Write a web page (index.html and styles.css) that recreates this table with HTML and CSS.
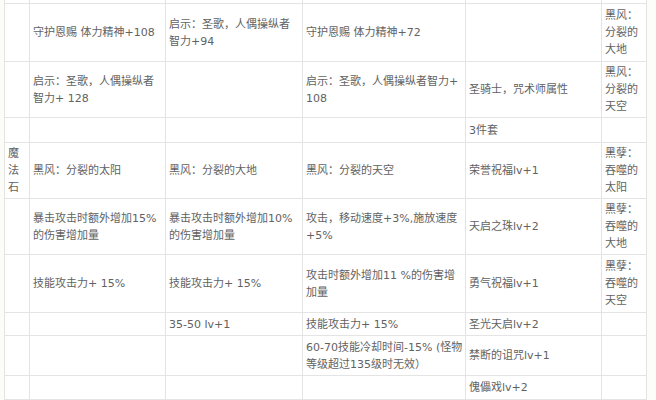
FILE: index.html
```html
<!DOCTYPE html>
<html lang="zh">
<head>
<meta charset="utf-8">
<link rel="stylesheet" href="styles.css">
</head>
<body>
<table class="gear">
  <colgroup>
    <col class="c1"><col class="c2"><col class="c3"><col class="c4"><col class="c5"><col class="c6">
  </colgroup>
  <tr class="r-stub"><td></td><td></td><td></td><td></td><td></td><td></td></tr>
  <tr class="r58">
    <td></td>
    <td>守护恩赐 体力精神+108</td>
    <td>启示：圣歌，人偶操纵者<br>智力+94</td>
    <td>守护恩赐 体力精神+72</td>
    <td></td>
    <td>黑风：<br>分裂的<br>大地</td>
  </tr>
  <tr class="r56">
    <td></td>
    <td>启示：圣歌，人偶操纵者<br>智力+ 128</td>
    <td></td>
    <td>启示：圣歌，人偶操纵者智力+<br>108</td>
    <td>圣骑士，咒术师属性</td>
    <td>黑风：<br>分裂的<br>天空</td>
  </tr>
  <tr class="r25">
    <td></td><td></td><td></td><td></td>
    <td>3件套</td>
    <td></td>
  </tr>
  <tr class="r56">
    <td>魔<br>法<br>石</td>
    <td>黑风：分裂的太阳</td>
    <td>黑风：分裂的大地</td>
    <td>黑风：分裂的天空</td>
    <td>荣誉祝福lv+1</td>
    <td>黑孽：<br>吞噬的<br>太阳</td>
  </tr>
  <tr class="r56">
    <td></td>
    <td>暴击攻击时额外增加15%<br>的伤害增加量</td>
    <td>暴击攻击时额外增加10%<br>的伤害增加量</td>
    <td>攻击，移动速度+3%,施放速度<br>+5%</td>
    <td>天启之珠lv+2</td>
    <td>黑孽：<br>吞噬的<br>大地</td>
  </tr>
  <tr class="r58">
    <td></td>
    <td>技能攻击力+ 15%</td>
    <td>技能攻击力+ 15%</td>
    <td>攻击时额外增加11 %的伤害增<br>加量</td>
    <td>勇气祝福lv+1</td>
    <td>黑孽：<br>吞噬的<br>天空</td>
  </tr>
  <tr class="r23">
    <td></td>
    <td></td>
    <td>35-50 lv+1</td>
    <td>技能攻击力+ 15%</td>
    <td>圣光天启lv+2</td>
    <td></td>
  </tr>
  <tr class="r40">
    <td></td>
    <td></td>
    <td></td>
    <td>60-70技能冷却时间-15% (怪物<br>等级超过135级时无效）</td>
    <td>禁断的诅咒lv+1</td>
    <td></td>
  </tr>
  <tr class="r24">
    <td></td><td></td><td></td><td></td>
    <td>傀儡戏lv+2</td>
    <td></td>
  </tr>
</table>
</body>
</html>
```
FILE: styles.css
```css
html, body {
  margin: 0;
  padding: 0;
  background: #fcfcf9;
  overflow: hidden;
}

body {
  height: 400px;
  padding-left: 4px;
}

.gear {
  border-collapse: collapse;
  table-layout: fixed;
  width: 642px;
  margin-top: -17px;
  background: #ffffff;
  font-family: "DejaVu Sans", "Noto Sans CJK SC", sans-serif;
  font-size: 11px;
  line-height: 17px;
  color: #626262;
}

.gear td {
  border: 1px solid #e4e4e4;
  padding: 0 2px 0 3px;
  vertical-align: middle;
  white-space: nowrap;
  overflow: hidden;
}

.c1 { width: 25px; }
.c2 { width: 136px; }
.c3 { width: 137px; }
.c4 { width: 163px; }
.c5 { width: 136px; }
.c6 { width: 45px; }

.r-stub { height: 20px; }
.r58 { height: 58px; }
.r56 { height: 56px; }
.r40 { height: 40px; }
.r25 { height: 25px; }
.r24 { height: 24px; }
.r23 { height: 23px; }
```
